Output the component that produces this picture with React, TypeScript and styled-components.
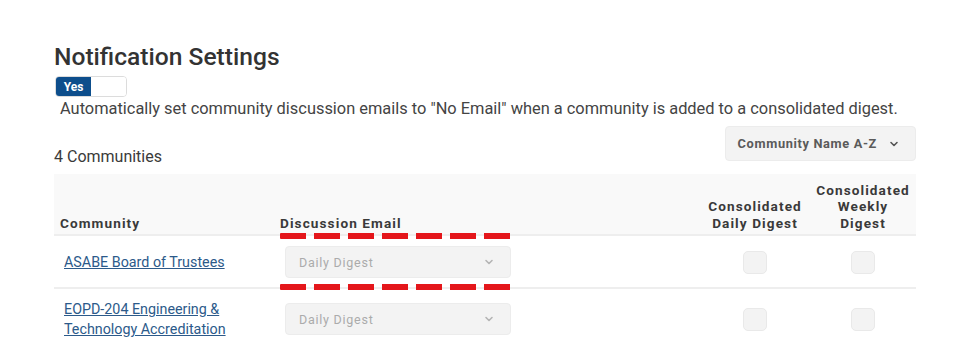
import { createGlobalStyle } from 'styled-components';
import styled from 'styled-components';

const GlobalStyle = createGlobalStyle`
  html, body {
    margin: 0;
    padding: 0;
    background: #ffffff;
  }
  body {
    font-family: Roboto, "Liberation Sans", Arial, sans-serif;
    color: #333333;
  }
`;

type Community = {
  name: string[];
  email: string;
};

const communities: Community[] = [
  { name: ['ASABE Board of Trustees'], email: 'Daily Digest' },
  {
    name: ['EOPD-204 Engineering &', 'Technology Accreditation'],
    email: 'Daily Digest',
  },
];

const Chevron = ({ color }: { color: string }) => (
  <svg width="10" height="10" viewBox="0 0 10 10" aria-hidden="true">
    <path
      d="M2 3.5 L5 6.5 L8 3.5"
      fill="none"
      stroke={color}
      strokeWidth="1.6"
      strokeLinecap="round"
      strokeLinejoin="round"
    />
  </svg>
);

export default function App() {
  return (
    <Page>
      <GlobalStyle />
      <Title>Notification Settings</Title>
      <Toggle>
        <ToggleOn>Yes</ToggleOn>
        <ToggleOff />
      </Toggle>
      <Description>
        Automatically set community discussion emails to "No Email" when a
        community is added to a consolidated digest.
      </Description>

      <Toolbar>
        <Count>4 Communities</Count>
        <SortButton>
          <span>Community Name A-Z</span>
          <Chevron color="#555" />
        </SortButton>
      </Toolbar>

      <Table>
        <HeaderRow>
          <HeadCell>Community</HeadCell>
          <HeadCell>
            Discussion Email
            <DashMark $offset={-8} />
          </HeadCell>
          <HeadCell />
          <HeadCell $center>
            Consolidated
            <br />
            Daily Digest
          </HeadCell>
          <HeadCell $center>
            Consolidated
            <br />
            Weekly
            <br />
            Digest
          </HeadCell>
        </HeaderRow>

        {communities.map((c, i) => (
          <Row key={c.name.join(' ')} $last={i === communities.length - 1}>
            <Cell>
              <CommunityLink href="#">
                {c.name.map((line, j) => (
                  <span key={line}>
                    {line}
                    {j < c.name.length - 1 && <br />}
                  </span>
                ))}
              </CommunityLink>
            </Cell>
            <Cell>
              <EmailSelect>
                <span>{c.email}</span>
                <Chevron color="#b5b5b5" />
              </EmailSelect>
              {i === 0 && <DashMark $offset={-12} />}
            </Cell>
            <Cell />
            <Cell $center>
              <Checkbox />
            </Cell>
            <Cell $center>
              <Checkbox />
            </Cell>
          </Row>
        ))}
      </Table>
    </Page>
  );
}

const Page = styled.div`
  width: 862px;
  padding: 42px 0 0 54px;
`;

const Title = styled.h1`
  margin: 0;
  font-size: 24.6px;
  line-height: 30px;
  font-weight: 500;
  color: #333333;
`;

const Toggle = styled.div`
  display: flex;
  width: 72px;
  height: 21px;
  margin: 4px 0 0 1px;
  border: 1px solid #dcdcdc;
  border-radius: 4px;
  overflow: hidden;
  box-sizing: border-box;
`;

const ToggleOn = styled.span`
  display: flex;
  align-items: center;
  justify-content: center;
  width: 35px;
  background: #0d4e8c;
  color: #ffffff;
  font-size: 12px;
  font-weight: 700;
`;

const ToggleOff = styled.span`
  flex: 1;
  background: #ffffff;
`;

const Description = styled.p`
  margin: 1px 0 0 6px;
  font-size: 16.4px;
  line-height: 22px;
  color: #444444;
  white-space: nowrap;
`;

const Toolbar = styled.div`
  display: flex;
  align-items: flex-end;
  justify-content: space-between;
  margin-top: 6px;
`;

const Count = styled.div`
  font-size: 16px;
  line-height: 20px;
  color: #3a3a3a;
  margin-bottom: -6px;
`;

const SortButton = styled.div`
  display: flex;
  align-items: center;
  gap: 12px;
  height: 35px;
  padding: 0 16px 0 12px;
  box-sizing: border-box;
  background: #f3f3f3;
  border: 1px solid #ececec;
  border-radius: 4px;
  font-size: 12.8px;
  font-weight: 700;
  letter-spacing: 0.05em;
  color: #5a5a5a;
`;

const Table = styled.div`
  margin-top: 13px;
`;

const gridColumns = '220px 246px 1fr 110px 106px';

const HeaderRow = styled.div`
  display: grid;
  grid-template-columns: ${gridColumns};
  align-items: end;
  height: 62px;
  box-sizing: border-box;
  padding-bottom: 3px;
  background: #f9f9f9;
  border-bottom: 2px solid #eeeeee;
`;

const HeadCell = styled.div<{ $center?: boolean }>`
  position: relative;
  padding-left: ${({ $center }) => ($center ? '0' : '6px')};
  text-align: ${({ $center }) => ($center ? 'center' : 'left')};
  font-size: 13.6px;
  line-height: 16.5px;
  font-weight: 700;
  letter-spacing: 0.08em;
  color: #3a3a3a;
`;

const Row = styled.div<{ $last?: boolean }>`
  display: grid;
  grid-template-columns: ${gridColumns};
  align-items: center;
  min-height: 32px;
  padding: 10px 0 9px;
  border-bottom: ${({ $last }) => ($last ? 'none' : '2px solid #eeeeee')};
`;

const Cell = styled.div<{ $center?: boolean }>`
  position: relative;
  display: flex;
  justify-content: ${({ $center }) => ($center ? 'center' : 'flex-start')};
`;

const CommunityLink = styled.a`
  margin-left: 10px;
  font-size: 14.3px;
  line-height: 20px;
  color: #2c5a8a;
  text-decoration: underline;
`;

const EmailSelect = styled.div`
  display: flex;
  align-items: center;
  justify-content: space-between;
  width: 226px;
  height: 32px;
  margin-left: 11px;
  padding: 0 16px 0 13px;
  box-sizing: border-box;
  background: #f3f3f3;
  border: 1px solid #ececec;
  border-radius: 4px;
  font-size: 12.5px;
  font-weight: 400;
  letter-spacing: 0.06em;
  color: #ababab;
`;

const Checkbox = styled.span`
  display: block;
  width: 24px;
  height: 23px;
  box-sizing: border-box;
  background: #f3f3f3;
  border: 1px solid #e9e9e9;
  border-radius: 5px;
`;

/* red dashed annotation drawn over the table */
const DashMark = styled.span<{ $offset: number }>`
  position: absolute;
  left: 6px;
  bottom: ${({ $offset }) => $offset}px;
  width: 231px;
  height: 6px;
  background: repeating-linear-gradient(
    to right,
    #e4161b 0,
    #e4161b 26px,
    transparent 26px,
    transparent 34px
  );
  border-radius: 1px;
  pointer-events: none;
`;
